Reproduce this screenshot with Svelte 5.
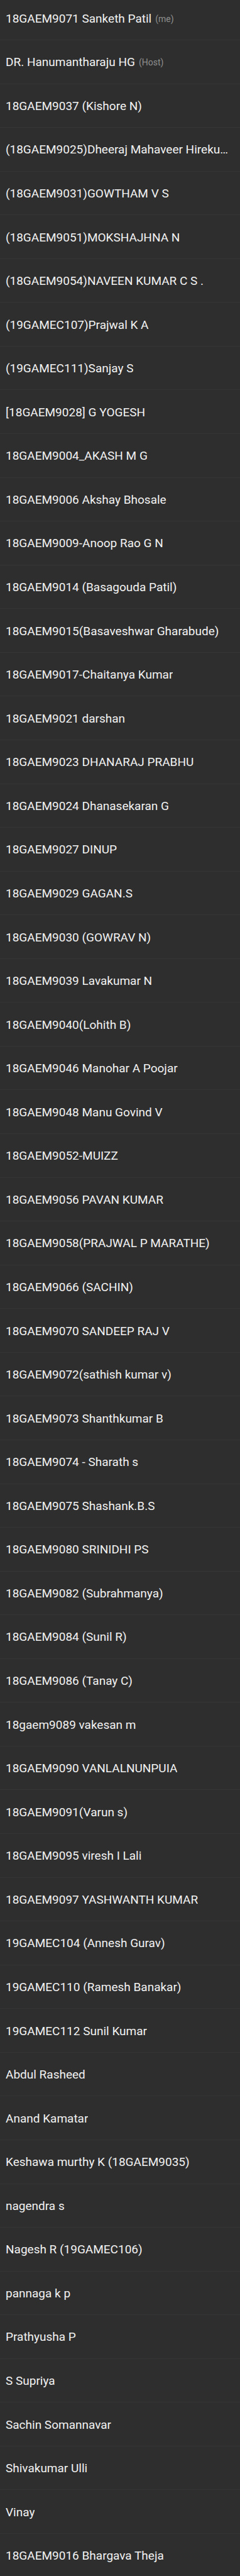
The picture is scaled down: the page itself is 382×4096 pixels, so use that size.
<script>
  const people = [
    { name: '18GAEM9071 Sanketh Patil', role: '(me)' },
    { name: 'DR. Hanumantharaju HG', role: '(Host)' },
    ...[
      '18GAEM9037 (Kishore N)',
      '(18GAEM9025)Dheeraj Mahaveer Hireku…',
      '(18GAEM9031)GOWTHAM V S',
      '(18GAEM9051)MOKSHAJHNA N',
      '(18GAEM9054)NAVEEN KUMAR C S .',
      '(19GAMEC107)Prajwal K A',
      '(19GAMEC111)Sanjay S',
      '[18GAEM9028] G YOGESH',
      '18GAEM9004_AKASH M G',
      '18GAEM9006 Akshay Bhosale',
      '18GAEM9009-Anoop Rao G N',
      '18GAEM9014 (Basagouda Patil)',
      '18GAEM9015(Basaveshwar Gharabude)',
      '18GAEM9017-Chaitanya Kumar',
      '18GAEM9021 darshan',
      '18GAEM9023 DHANARAJ PRABHU',
      '18GAEM9024 Dhanasekaran G',
      '18GAEM9027 DINUP',
      '18GAEM9029 GAGAN.S',
      '18GAEM9030 (GOWRAV N)',
      '18GAEM9039 Lavakumar N',
      '18GAEM9040(Lohith B)',
      '18GAEM9046 Manohar A Poojar',
      '18GAEM9048 Manu Govind V',
      '18GAEM9052-MUIZZ',
      '18GAEM9056 PAVAN KUMAR',
      '18GAEM9058(PRAJWAL P MARATHE)',
      '18GAEM9066 (SACHIN)',
      '18GAEM9070 SANDEEP RAJ V',
      '18GAEM9072(sathish kumar v)',
      '18GAEM9073 Shanthkumar B',
      '18GAEM9074 - Sharath s',
      '18GAEM9075 Shashank.B.S',
      '18GAEM9080 SRINIDHI PS',
      '18GAEM9082 (Subrahmanya)',
      '18GAEM9084 (Sunil R)',
      '18GAEM9086 (Tanay C)',
      '18gaem9089 vakesan m',
      '18GAEM9090 VANLALNUNPUIA',
      '18GAEM9091(Varun s)',
      '18GAEM9095 viresh I Lali',
      '18GAEM9097 YASHWANTH KUMAR',
      '19GAMEC104 (Annesh Gurav)',
      '19GAMEC110 (Ramesh Banakar)',
      '19GAMEC112 Sunil Kumar',
      'Abdul Rasheed',
      'Anand Kamatar',
      'Keshawa murthy K (18GAEM9035)',
      'nagendra s',
      'Nagesh R (19GAMEC106)',
      'pannaga k p',
      'Prathyusha P',
      'S Supriya',
      'Sachin Somannavar',
      'Shivakumar Ulli',
      'Vinay',
      '18GAEM9016 Bhargava Theja'
    ].map((name) => ({ name }))
  ];
</script>

<ul class="participants">
  {#each people as person}
    <li class="row">
      <span class="name">{person.name}</span>
      {#if person.role}
        <span class="role">{person.role}</span>
      {/if}
    </li>
  {/each}
</ul>

<style>
  :global(body) {
    background: #2e2e2e;
  }

  .participants {
    display: grid;
    grid-template-columns: minmax(0, 1fr);
    grid-template-rows: 64px repeat(57, minmax(48px, 1fr)) 67px;
    min-height: 100vh;
    margin: 0;
    padding: 0;
    list-style: none;
    background: #2e2e2e;
    color: #f2f2f2;
    font-family: Roboto, sans-serif;
    font-size: 19px;
    line-height: 24px;
  }

  .row {
    display: flex;
    align-items: center;
    gap: 6px;
    box-sizing: border-box;
    padding: 2px 9px 0;
    border-bottom: 1px solid #353535;
  }

  .row:first-child {
    padding-top: 0;
    padding-bottom: 4px;
  }

  .row:last-child {
    padding-top: 4px;
    border-bottom: 0;
  }

  .name {
    min-width: 0;
    overflow: hidden;
    text-overflow: ellipsis;
    white-space: nowrap;
  }

  .role {
    flex: none;
    color: #8f8f8f;
    font-size: 14px;
  }
</style>
